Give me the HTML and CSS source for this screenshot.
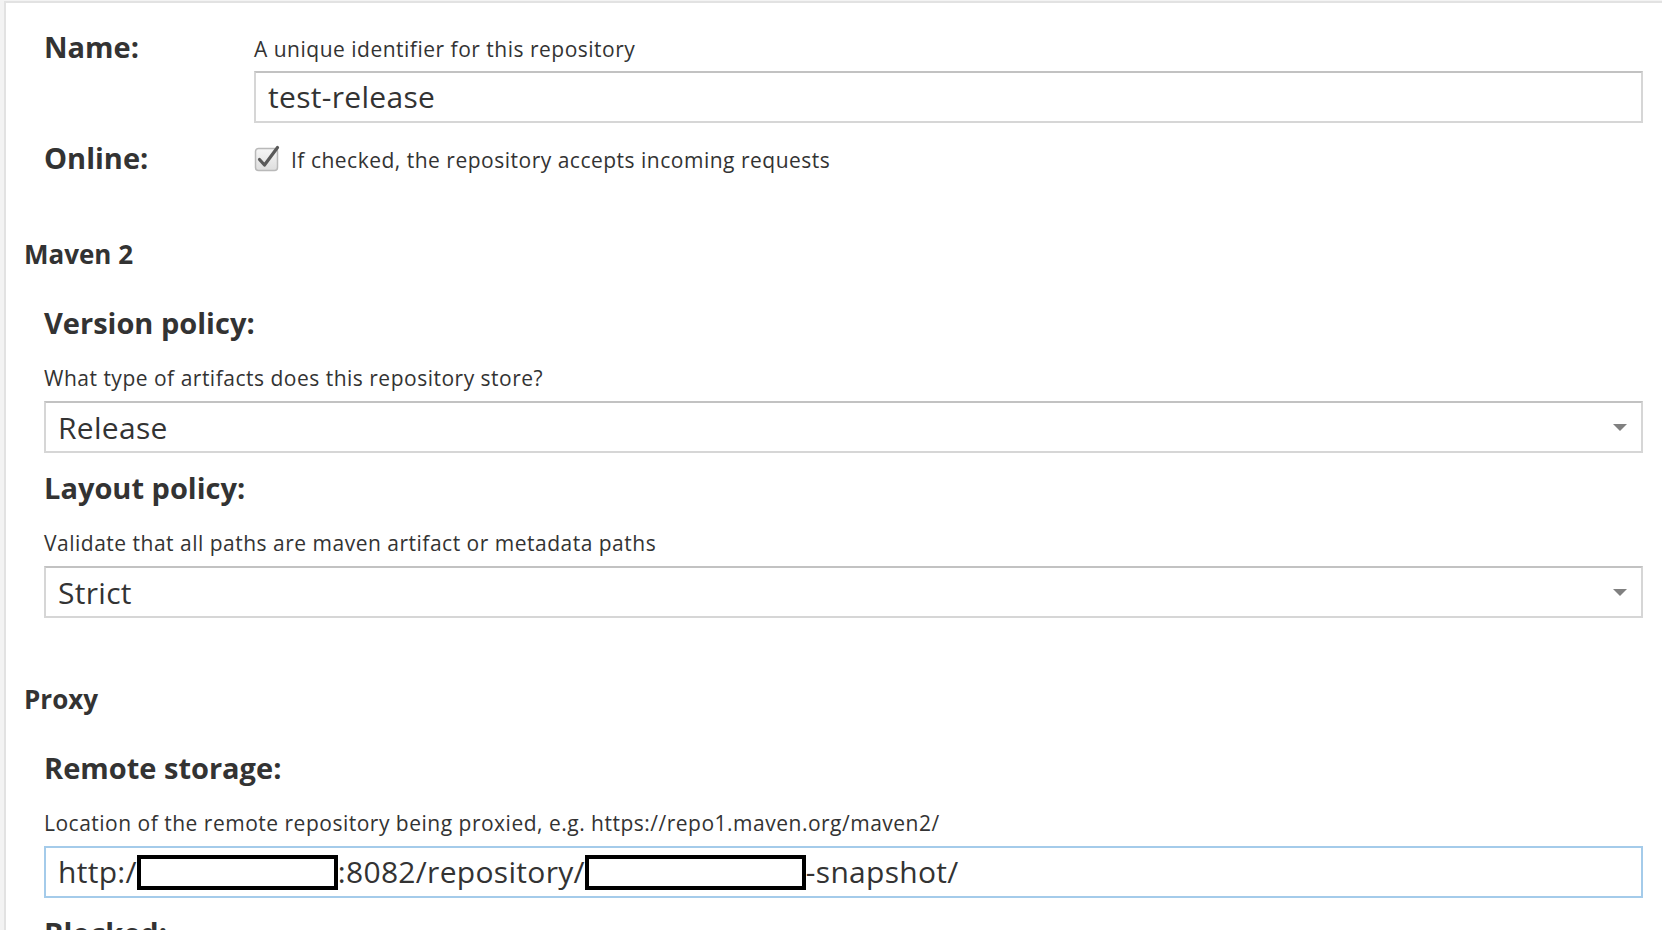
FILE: index.html
```html
<!DOCTYPE html>
<html lang="en">
<head>
<meta charset="utf-8">
<title>Repository settings</title>
<link rel="stylesheet" href="styles.css">
</head>
<body>
<div class="page">
  <form class="panel">
    <div class="row row-name">
      <div class="row-label">Name:</div>
      <div class="row-body">
        <div class="help">A unique identifier for this repository</div>
        <div class="textbox">test-release</div>
      </div>
    </div>
    <div class="row row-online">
      <div class="row-label">Online:</div>
      <div class="row-body check-line">
        <span class="checkbox">
          <svg width="28" height="28" viewBox="0 0 28 28">
            <defs>
              <linearGradient id="cbg" x1="0" y1="0" x2="0" y2="1">
                <stop offset="0" stop-color="#f6f6f6"/>
                <stop offset="1" stop-color="#dedede"/>
              </linearGradient>
            </defs>
            <rect x="1.5" y="4.5" width="22" height="22" rx="3" fill="url(#cbg)" stroke="#b9b9b9" stroke-width="1.5"/>
            <path d="M5.5 15.5 L10.5 21 L23.5 3.5" fill="none" stroke="#5a5a5a" stroke-width="3.2" stroke-linecap="round" stroke-linejoin="round"/>
          </svg>
        </span>
        <span class="help">If checked, the repository accepts incoming requests</span>
      </div>
    </div>

    <h2 class="section">Maven 2</h2>
    <div class="field">
      <div class="field-label">Version policy:</div>
      <div class="help">What type of artifacts does this repository store?</div>
      <div class="select"><span class="select-value">Release</span><span class="arrow"></span></div>
    </div>
    <div class="field">
      <div class="field-label">Layout policy:</div>
      <div class="help">Validate that all paths are maven artifact or metadata paths</div>
      <div class="select"><span class="select-value">Strict</span><span class="arrow"></span></div>
    </div>

    <h2 class="section section-proxy">Proxy</h2>
    <div class="field">
      <div class="field-label">Remote storage:</div>
      <div class="help">Location of the remote repository being proxied, e.g. https://repo1.maven.org/maven2/</div>
      <div class="textbox textbox-focus">http:/<span class="redact redact-host"></span>:8082/repository/<span class="redact redact-repo"></span>-snapshot/</div>
    </div>
    <div class="field">
      <div class="field-label">Blocked:</div>
    </div>
  </form>
</div>
</body>
</html>
```
FILE: styles.css
```css
html, body {
  margin: 0;
  padding: 0;
  height: 100%;
  overflow: hidden;
}
body {
  background: #f3f3f3;
  font-family: "Open Sans", "Liberation Sans", sans-serif;
  color: #333333;
}
.page {
  padding: 1px 0 0 4px;
  height: 100%;
  box-sizing: border-box;
}
.panel {
  background: #ffffff;
  border-top: 2px solid #e2e2e2;
  border-left: 2px solid #e2e2e2;
  min-height: 100%;
  box-sizing: border-box;
  padding: 32px 19px 0 18px;
  display: flex;
  flex-direction: column;
}
.row {
  display: flex;
  margin-left: 20px;
}
.row-label {
  width: 210px;
  flex: none;
  font-size: 29px;
  font-weight: 700;
  line-height: 22px;
  padding-top: 1px;
}
.row-body {
  flex: 1;
  display: flex;
  flex-direction: column;
}
.help {
  font-size: 21px;
  letter-spacing: 0.5px;
  line-height: 24px;
  color: #333333;
}
.row-name .help {
  margin-top: 2px;
  margin-bottom: 10px;
}
.textbox {
  height: 48px;
  border: 2px solid #d6d6d6;
  border-top-color: #c2c2c2;
  padding: 0 12px;
  font-size: 30px;
  letter-spacing: 0.3px;
  line-height: 48px;
  color: #333;
  white-space: nowrap;
  overflow: hidden;
  display: flex;
  align-items: center;
}
.row-online {
  margin-top: 21px;
  align-items: center;
  height: 28px;
}
.row-online .row-label {
  padding-top: 0;
}
.row-online .help {
  padding-top: 3px;
}
.check-line {
  flex-direction: row;
  align-items: center;
  gap: 9px;
}
.checkbox {
  display: flex;
  width: 28px;
  height: 28px;
}
.section {
  margin: 67px 0 0 0;
  font-size: 26px;
  font-weight: 700;
  line-height: 30px;
}
.section-proxy {
  margin-top: 66px;
}
.field {
  margin: 36px 0 0 20px;
  display: flex;
  flex-direction: column;
}
.field + .field {
  margin-top: 17px;
}
.field-label {
  font-size: 29px;
  font-weight: 700;
  line-height: 36px;
  margin-bottom: 25px;
}
.field .help {
  margin-bottom: 11px;
}
.select {
  height: 48px;
  border: 2px solid #d6d6d6;
  border-top-color: #c2c2c2;
  padding: 0 14px 0 12px;
  display: flex;
  align-items: center;
  justify-content: space-between;
  font-size: 30px;
  letter-spacing: 0.3px;
  color: #333;
}
.arrow {
  width: 0;
  height: 0;
  border-left: 7px solid transparent;
  border-right: 7px solid transparent;
  border-top: 7px solid #808080;
}
.textbox-focus {
  border-color: #a4cbea;
}
.redact {
  display: inline-block;
  box-sizing: border-box;
  height: 35px;
  border: 4px solid #000;
  background: #fff;
  flex: none;
}
.redact-host {
  width: 201px;
}
.redact-repo {
  width: 221px;
}
```
